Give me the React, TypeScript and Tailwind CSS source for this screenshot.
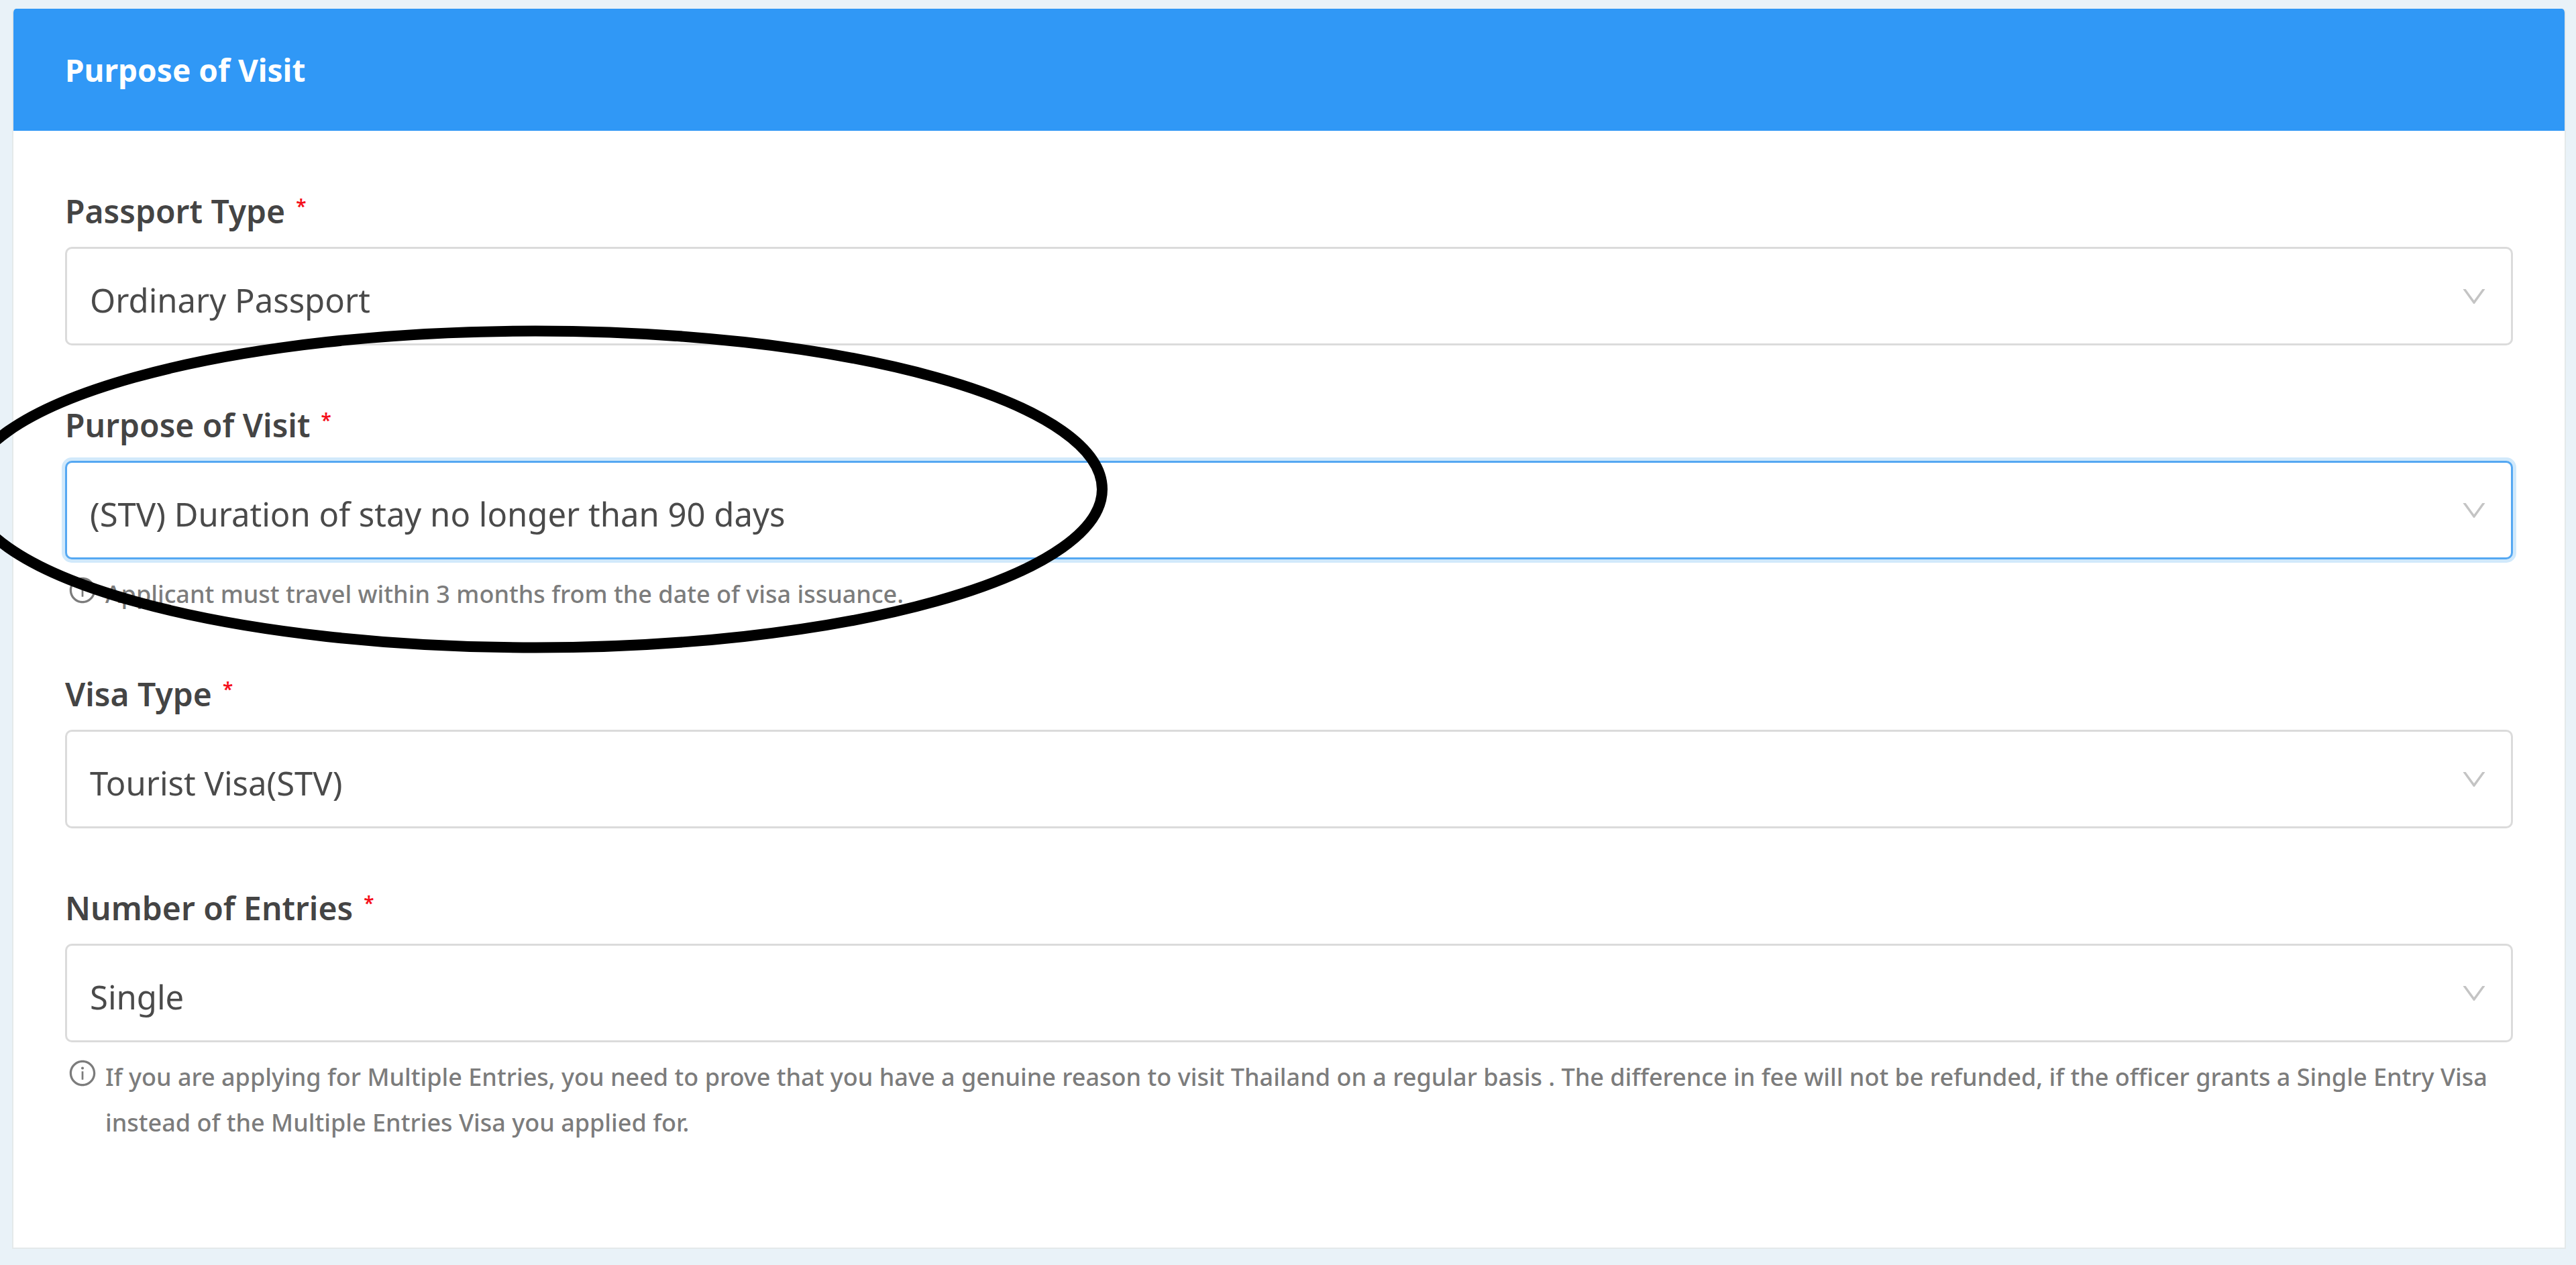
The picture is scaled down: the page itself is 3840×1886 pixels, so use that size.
import type { ReactNode } from "react";
import { AiOutlineDown, AiOutlineInfoCircle } from "react-icons/ai";

type FieldProps = {
  id: string;
  label: string;
  value: string;
  active?: boolean;
  children?: ReactNode;
};

function Field({ id, label, value, active = false, children }: FieldProps) {
  return (
    <div className="flex flex-col">
      <label
        htmlFor={id}
        className="mb-[17px] flex items-start gap-4 self-start text-[48px] leading-[72px] font-semibold text-[#444444]"
      >
        {label}
        <span className="text-[28px] leading-[56px] text-[#f5101c]">*</span>
      </label>
      <div className="relative">
        <select
          id={id}
          defaultValue={value}
          className={
            active
              ? "block h-[147px] w-full appearance-none rounded-[10px] border-3 border-[#55a8f2] bg-white pt-3 pr-24 pl-[34px] text-[49px] text-[#4a4a4a] ring-5 ring-[#d1e9fb] outline-none"
              : "block h-[147px] w-full appearance-none rounded-[10px] border-3 border-[#dbdbdb] bg-white pt-3 pr-24 pl-[34px] text-[49px] text-[#4a4a4a] outline-none"
          }
        >
          <option>{value}</option>
        </select>
        <AiOutlineDown
          aria-hidden="true"
          className="pointer-events-none absolute top-1/2 right-9 size-11 -translate-y-1/2 text-[#c4c4c4]"
        />
      </div>
      {children && (
        <div className="mt-[18px] -mb-1 flex gap-3 pl-1 text-[36px] leading-[68px] font-medium text-[#7c7c7c]">
          <AiOutlineInfoCircle aria-hidden="true" className="mt-[6px] size-11 shrink-0" />
          <p>{children}</p>
        </div>
      )}
    </div>
  );
}

/* Hand-drawn style highlight that circles the purpose field. */
function Highlight() {
  return (
    <svg
      aria-hidden="true"
      className="pointer-events-none absolute top-0 left-0"
      width="1660"
      height="980"
      viewBox="0 0 1660 980"
      fill="none"
    >
      <ellipse cx="798" cy="729.5" rx="845" ry="236" stroke="#000000" strokeWidth="16" />
    </svg>
  );
}

export default function App() {
  return (
    <main className="relative min-h-screen overflow-hidden bg-[#e9f2f8] pt-[13px] pr-[15px] pb-6 pl-[18px] font-['Noto_Sans',sans-serif]">
      <section className="overflow-hidden rounded-t-md border-x-2 border-b-2 border-[#e4e9ea] bg-white">
        <h1 className="bg-[#3098f6] px-[77px] py-[55px] text-[46px] leading-[72px] font-bold text-white">
          Purpose of Visit
        </h1>
        <form className="flex flex-col gap-[83px] px-[77px] pt-[84px] pb-[156px]">
          <Field id="passport-type" label="Passport Type" value="Ordinary Passport" />
          <Field
            id="purpose"
            label="Purpose of Visit"
            value="(STV) Duration of stay no longer than 90 days"
            active
          >
            Applicant must travel within 3 months from the date of visa issuance.
          </Field>
          <Field id="visa-type" label="Visa Type" value="Tourist Visa(STV)" />
          <Field id="entries" label="Number of Entries" value="Single">
            If you are applying for Multiple Entries, you need to prove that you have a genuine reason to visit
            Thailand on a regular basis . The difference in fee will not be refunded, if the officer grants a Single
            Entry Visa instead of the Multiple Entries Visa you applied for.
          </Field>
        </form>
      </section>
      <Highlight />
    </main>
  );
}
